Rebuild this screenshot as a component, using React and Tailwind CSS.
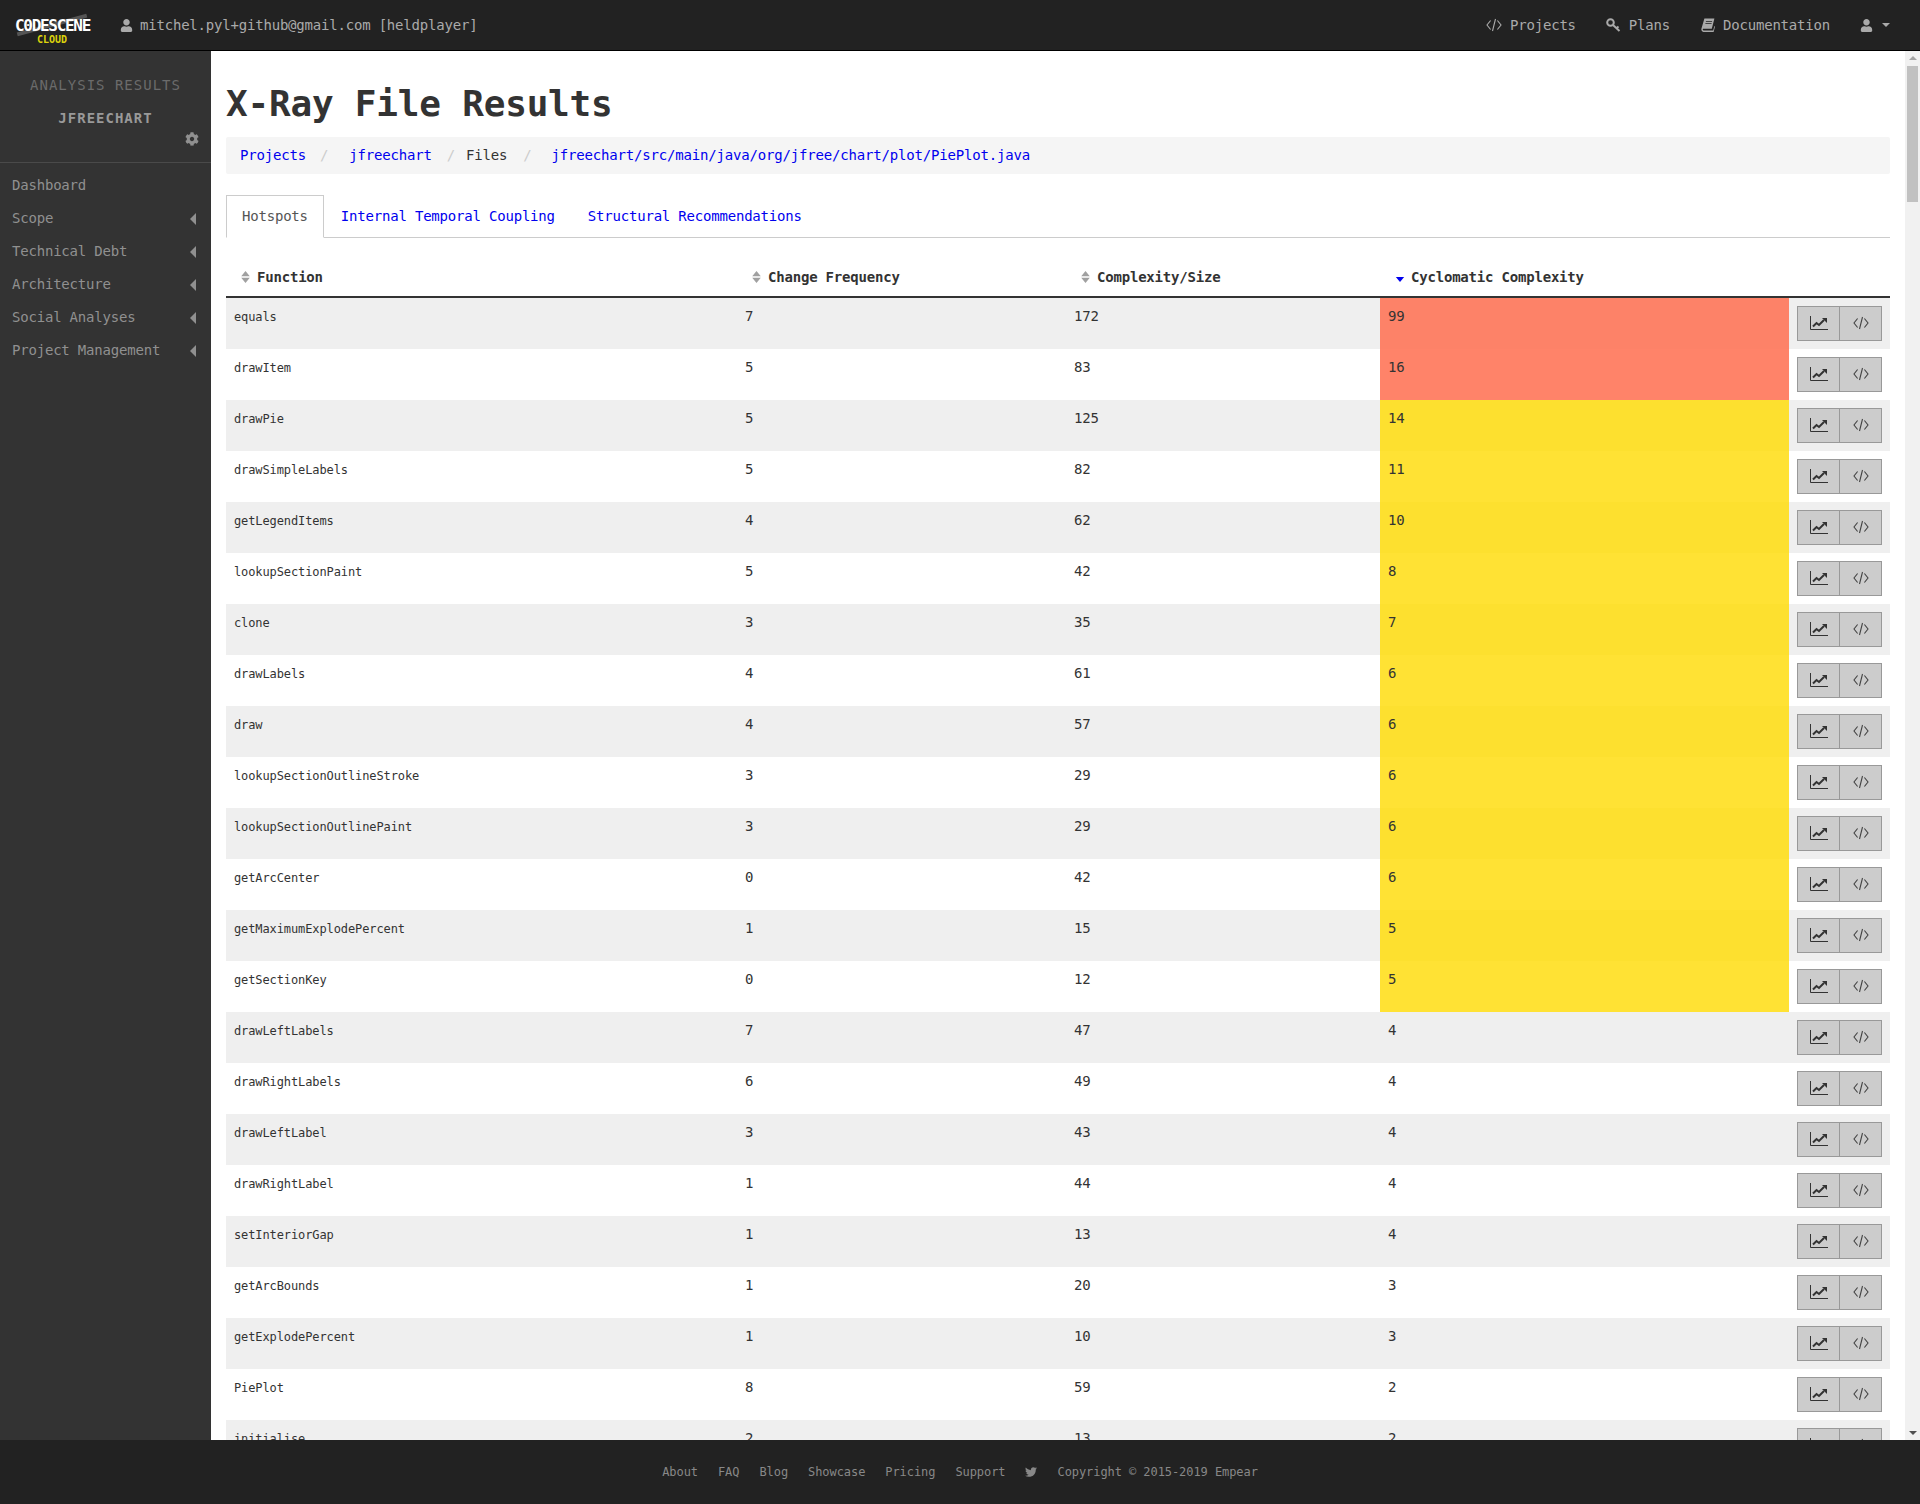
import { FaUser, FaCog, FaTwitter } from "react-icons/fa";

const rows = [
  ["equals", 7, 172, 99],
  ["drawItem", 5, 83, 16],
  ["drawPie", 5, 125, 14],
  ["drawSimpleLabels", 5, 82, 11],
  ["getLegendItems", 4, 62, 10],
  ["lookupSectionPaint", 5, 42, 8],
  ["clone", 3, 35, 7],
  ["drawLabels", 4, 61, 6],
  ["draw", 4, 57, 6],
  ["lookupSectionOutlineStroke", 3, 29, 6],
  ["lookupSectionOutlinePaint", 3, 29, 6],
  ["getArcCenter", 0, 42, 6],
  ["getMaximumExplodePercent", 1, 15, 5],
  ["getSectionKey", 0, 12, 5],
  ["drawLeftLabels", 7, 47, 4],
  ["drawRightLabels", 6, 49, 4],
  ["drawLeftLabel", 3, 43, 4],
  ["drawRightLabel", 1, 44, 4],
  ["setInteriorGap", 1, 13, 4],
  ["getArcBounds", 1, 20, 3],
  ["getExplodePercent", 1, 10, 3],
  ["PiePlot", 8, 59, 2],
  ["initialise", 2, 13, 2],
];

const sideItems = ["Scope", "Technical Debt", "Architecture", "Social Analyses", "Project Management"];
const footerLinks = ["About", "FAQ", "Blog", "Showcase", "Pricing", "Support"];

function CodeIcon({ className }) {
  return (
    <svg viewBox="0 0 16 14" className={className} fill="none" stroke="currentColor" strokeWidth="1.1">
      <path d="M4.6 2.5 1 7l3.6 4.5M11.4 2.5 15 7l-3.6 4.5M9.5 1 6.5 13" />
    </svg>
  );
}

function ChartIcon() {
  return (
    <svg viewBox="0 0 18 14" className="mb-[2px] h-[14px] w-[18px] text-[#333]" fill="none" stroke="currentColor">
      <path d="M.5 0v13.500H18" strokeWidth="1" />
      <path d="M3 10.500 6.500 7l2.500 2 5-5" strokeWidth="2" />
      <path d="M12 2h5v5z" fill="currentColor" stroke="none" />
    </svg>
  );
}

function KeyIcon() {
  return (
    <svg viewBox="0 0 15 14" className="h-[14px] w-[15px]" fill="none" stroke="currentColor">
      <circle cx="4.500" cy="4.500" r="3.300" strokeWidth="2" />
      <path d="M7 7l6.500 6M10.500 10.200l2-1.700" strokeWidth="2" />
    </svg>
  );
}

function BookIcon() {
  return (
    <svg viewBox="0 0 14 14" className="h-[14px] w-[14px]" fill="currentColor">
      <path d="M3.400.5h10l-2.600 10.200H2.600c-.8 0-1 .7-.8 1.100.1.400.5.700 1 .700h9.400l1.200-4.600.6.600-1.400 5.500H2.400C1 13.500 0 12.200.4 10.800z" />
      <path d="M5 3h6.200l-.2.800H4.800zM4.500 5h6.200l-.2.800H4.300z" fill="#222" />
    </svg>
  );
}

function CaretLeft() {
  return (
    <svg viewBox="0 0 6 12" className="h-[12px] w-[6px]" fill="currentColor">
      <path d="M6 0v12L0 6z" />
    </svg>
  );
}

function SortIcon({ active }) {
  if (active) {
    return (
      <svg viewBox="0 0 10 6" className="mt-[5px] h-[5px] w-[10px] text-[#0000ee]" fill="currentColor">
        <path d="M0 0h10L5 6z" />
      </svg>
    );
  }
  return (
    <svg viewBox="0 0 10 14" className="h-[12px] w-[9px] text-[#a0a0a0]" fill="currentColor">
      <path d="M5 0l5 6H0zM0 8h10l-5 6z" />
    </svg>
  );
}

function complexityBg(value, even) {
  if (value >= 16) return even ? "bg-[#fd8268]" : "bg-[#ff8369]";
  if (value >= 5) return even ? "bg-[#fde02f]" : "bg-[#ffe234]";
  return "";
}

function Th({ label, active, className }) {
  return (
    <th className={`h-[45px] border-b-2 border-[#333] pt-[5px] text-left align-middle font-bold text-[#333] ${className}`}>
      <span className={`flex items-center ${active ? "gap-[6px]" : "gap-[7px]"}`}>
        <SortIcon active={active} />
        {label}
      </span>
    </th>
  );
}

export default function App() {
  return (
    <div className="flex h-[1504px] flex-col overflow-hidden bg-white font-['DejaVu_Sans_Mono',monospace] text-[14px] tracking-[-0.2px] text-[#333]">
      <header className="flex h-[51px] shrink-0 items-center border-b border-black bg-[#222] pr-[30px] text-[#aaa]">
        <div className="relative ml-[15px] mt-[11px] w-[75px]">
          <div className="absolute left-[1px] top-[6px] h-[4px] w-[72px] -rotate-[15deg] bg-[#555]" />
          <div className="relative text-[16px] font-bold leading-[17px] tracking-[-1.3px] text-white">C0DESCENE</div>
          <div className="relative pr-[1px] text-center text-[10px] font-bold leading-[11px] tracking-[0px] text-[#dcd20c]">CLOUD</div>
        </div>
        <FaUser className="ml-[30px] h-[13px] w-[13px]" />
        <span className="ml-[7px]">mitchel.pyl+github@gmail.com [heldplayer]</span>
        <nav className="ml-auto flex items-center">
          <CodeIcon className="h-[14px] w-[16px]" />
          <span className="ml-[8px]">Projects</span>
          <span className="ml-[30px]"><KeyIcon /></span>
          <span className="ml-[8px]">Plans</span>
          <span className="ml-[31px]"><BookIcon /></span>
          <span className="ml-[8px]">Documentation</span>
          <FaUser className="ml-[30px] h-[13px] w-[13px]" />
          <svg viewBox="0 0 8 4" className="ml-[9px] h-[4px] w-[8px]" fill="currentColor">
            <path d="M0 0h8L4 4z" />
          </svg>
        </nav>
      </header>

      <div className="flex min-h-0 flex-1">
        <aside className="w-[211px] shrink-0 bg-[#333] text-[#909090]">
          <div className="border-b border-[#4a4a4a] pb-[16px] pt-[26px] text-center">
            <div className="leading-[16px] tracking-[1px] text-[#6b6b6b]">ANALYSIS RESULTS</div>
            <div className="mt-[17px] font-bold leading-[16px] tracking-[1px] text-[#999]">JFREECHART</div>
            <div className="mt-[6px] flex justify-end pr-[12px]">
              <FaCog className="h-[14px] w-[14px]" />
            </div>
          </div>
          <ul className="pt-[6px]">
            <li className="flex h-[33px] items-center pl-[12px]">Dashboard</li>
            {sideItems.map((item) => (
              <li key={item} className="flex h-[33px] items-center justify-between pl-[12px] pr-[15px]">
                {item}
                <CaretLeft />
              </li>
            ))}
          </ul>
        </aside>

        <main className="min-w-0 flex-1 overflow-hidden px-[15px]">
          <h1 className="mt-[30px] text-[36px] font-bold leading-[45px] text-[#333]">X-Ray File Results</h1>
          <ol className="mt-[11px] flex h-[37px] items-center rounded-[2px] bg-[#f5f5f5] pl-[14px] tracking-[-0.18px]">
            <li className="text-[#0000ee]">Projects</li>
            <li className="ml-[14px] text-[#ccc]">/</li>
            <li className="ml-[21px] text-[#0000ee]">jfreechart</li>
            <li className="ml-[15px] text-[#ccc]">/</li>
            <li className="ml-[11px]">Files</li>
            <li className="ml-[16px] text-[#ccc]">/</li>
            <li className="ml-[20px] text-[#0000ee]">jfreechart/src/main/java/org/jfree/chart/plot/PiePlot.java</li>
          </ol>
          <div className="mt-[21px] flex h-[43px] border-b border-[#ccc]">
            <div className="-mb-px flex items-center border border-[#ccc] border-b-white bg-white px-[15px] text-[#555]">Hotspots</div>
            <div className="flex items-center pl-[17px] pr-[16px] text-[#0000ee]">Internal Temporal Coupling</div>
            <div className="flex items-center pl-[17px] text-[#0000ee]">Structural Recommendations</div>
          </div>
          <table className="mt-[15px] w-full table-fixed border-separate border-spacing-0">
            <colgroup>
              <col className="w-[511px]" />
              <col className="w-[329px]" />
              <col className="w-[314px]" />
              <col className="w-[409px]" />
              <col className="w-[101px]" />
            </colgroup>
            <thead>
              <tr>
                <Th label="Function" className="pl-[15px]" />
                <Th label="Change Frequency" className="pl-[15px]" />
                <Th label="Complexity/Size" className="pl-[15px]" />
                <Th label="Cyclomatic Complexity" active className="pl-[15px]" />
                <th className="border-b-2 border-[#333]" />
              </tr>
            </thead>
            <tbody>
              {rows.map((r, i) => (
                <tr key={r[0]} className={i % 2 === 0 ? "bg-[#efefef]" : "bg-white"}>
                  <td className="h-[51px] px-[8px] pb-[14px] align-middle text-[12px] tracking-[-0.1px]">{r[0]}</td>
                  <td className="h-[51px] px-[8px] pb-[14px] align-middle">{r[1]}</td>
                  <td className="h-[51px] px-[8px] pb-[14px] align-middle">{r[2]}</td>
                  <td className={`h-[51px] px-[8px] pb-[14px] align-middle ${complexityBg(r[3], i % 2 === 0)}`}>{r[3]}</td>
                  <td className="h-[51px] px-[8px] align-middle">
                    <div className="flex h-[35px] border border-[#999] bg-[#ccc]">
                      <span className="flex w-[42px] items-center justify-center border-r border-[#999]">
                        <ChartIcon />
                      </span>
                      <span className="flex flex-1 items-center justify-center pb-[2px] text-[#444]">
                        <CodeIcon className="h-[14px] w-[16px]" />
                      </span>
                    </div>
                  </td>
                </tr>
              ))}
            </tbody>
          </table>
        </main>

        <div className="flex w-[15px] shrink-0 flex-col items-center bg-[#f1f1f1] pt-[5px]">
          <svg viewBox="0 0 8 4" className="h-[4px] w-[8px] text-[#a3a3a3]" fill="currentColor">
            <path d="M4 0l4 4H0z" />
          </svg>
          <div className="mt-[6px] h-[136px] w-[11px] bg-[#c1c1c1]" />
          <svg viewBox="0 0 8 4" className="mb-[5px] mt-auto h-[4px] w-[8px] text-[#505050]" fill="currentColor">
            <path d="M0 0h8L4 4z" />
          </svg>
        </div>
      </div>

      <footer className="flex h-[64px] shrink-0 items-center justify-center bg-[#222] text-[12px] tracking-[-0.07px] text-[#888]">
        {footerLinks.map((link) => (
          <span key={link} className="mr-[20px]">{link}</span>
        ))}
        <FaTwitter className="mr-[20px] h-[12px] w-[12px]" />
        <span>Copyright © 2015-2019 Empear</span>
      </footer>
    </div>
  );
}
